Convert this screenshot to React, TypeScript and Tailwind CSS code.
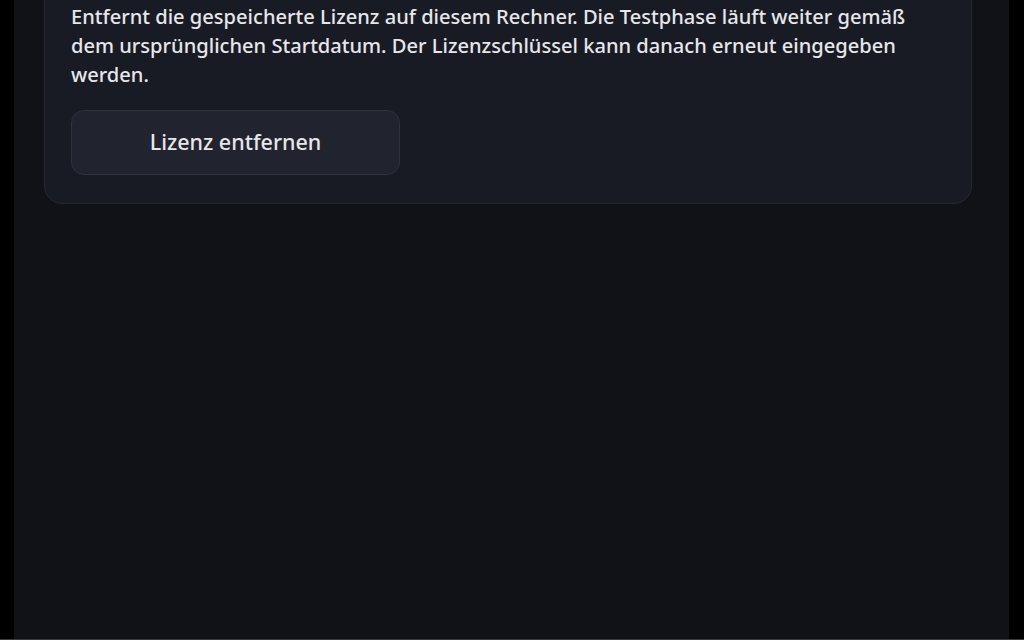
export default function App() {
  return (
    <div className="flex h-[640px] w-[1024px] flex-col overflow-hidden bg-black font-['Noto_Sans',sans-serif]">
      <div className="flex min-h-0 flex-1">
        <div className="w-[14px] shrink-0 bg-black" />
        <main className="min-w-0 flex-1 bg-[#111217]">
          <section className="-mt-[30px] ml-[30px] mr-[37px] rounded-[18px] border border-[#252833] bg-[#191b24] pl-[26px] pr-6 pt-[31px] pb-[28px]">
            <p className="text-[20.1px] font-medium leading-[29px] text-[#e6e7ea]">
              Entfernt die gespeicherte Lizenz auf diesem Rechner. Die Testphase läuft weiter gemäß
              <br />
              dem ursprünglichen Startdatum. Der Lizenzschlüssel kann danach erneut eingegeben
              <br />
              werden.
            </p>
            <button
              type="button"
              className="mt-[21px] flex h-[65px] w-[329px] items-center justify-center rounded-[13px] border border-[#2f323e] bg-[#21232e] text-[21.5px] font-medium text-[#e6e7ea]"
            >
              Lizenz entfernen
            </button>
          </section>
        </main>
        <div className="w-[15px] shrink-0 bg-black" />
      </div>
      <div className="h-px bg-[#3b3b3b]" />
    </div>
  )
}
